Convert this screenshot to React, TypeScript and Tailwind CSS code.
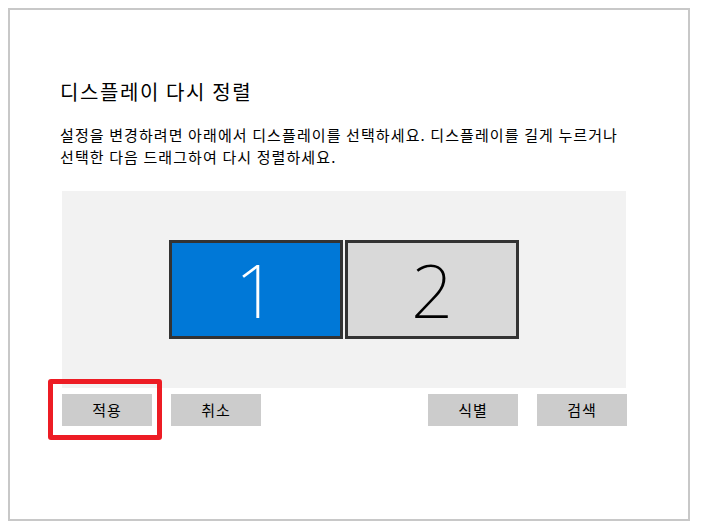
import React from 'react';

const kr = { fontFamily: '"Noto Sans CJK KR", "Noto Sans", sans-serif' };

function DisplayTile({ n, active }: { n: number; active?: boolean }) {
  return (
    <div
      className={`w-[174px] h-[99px] border-[3px] border-[#333333] flex items-center justify-center ${
        active ? 'bg-[#0078d7] text-white' : 'bg-[#d9d9d9] text-black'
      }`}
    >
      <span className="text-[74px] leading-none font-extralight" style={{ fontFamily: '"Noto Sans", "Open Sans", sans-serif' }}>
        {n}
      </span>
    </div>
  );
}

function Btn({ label }: { label: string }) {
  return (
    <button className="w-[90px] h-[32px] bg-[#cccccc] text-[15px] tracking-[1px] text-black flex items-center justify-center">
      {label}
    </button>
  );
}

export default function App() {
  return (
    <div className="w-[703px] h-[532px] bg-white pt-2 pl-2" style={kr}>
      <div className="w-[682px] h-[513px] border-2 border-[#c8c8c8] pt-[68px] pl-[50px]">
        <h1 className="text-[20px] leading-[28px] font-normal text-black tracking-[1.6px]">디스플레이 다시 정렬</h1>
        <p className="mt-[18px] text-[15px] leading-[22px] text-black tracking-[1.1px] whitespace-nowrap">
          설정을 변경하려면 아래에서 디스플레이를 선택하세요. 디스플레이를 길게 누르거나
          <br />
          선택한 다음 드래그하여 다시 정렬하세요.
        </p>

        {/* arrangement canvas */}
        <div className="ml-[2px] mt-[23px] w-[564px] h-[197px] bg-[#f2f2f2] flex items-center justify-center gap-[2px]">
          <DisplayTile n={1} active />
          <DisplayTile n={2} />
        </div>

        <div className="ml-[2px] mt-[6px] w-[565px] flex justify-between">
          <div className="flex gap-[19px]">
            <div className="relative">
              <Btn label="적용" />
              <div className="absolute -left-[14px] -top-[15px] w-[114px] h-[61px] border-[5px] border-[#ed1c24] rounded-[3px] pointer-events-none" />
            </div>
            <Btn label="취소" />
          </div>
          <div className="flex gap-[19px]">
            <Btn label="식별" />
            <Btn label="검색" />
          </div>
        </div>
      </div>
    </div>
  );
}
